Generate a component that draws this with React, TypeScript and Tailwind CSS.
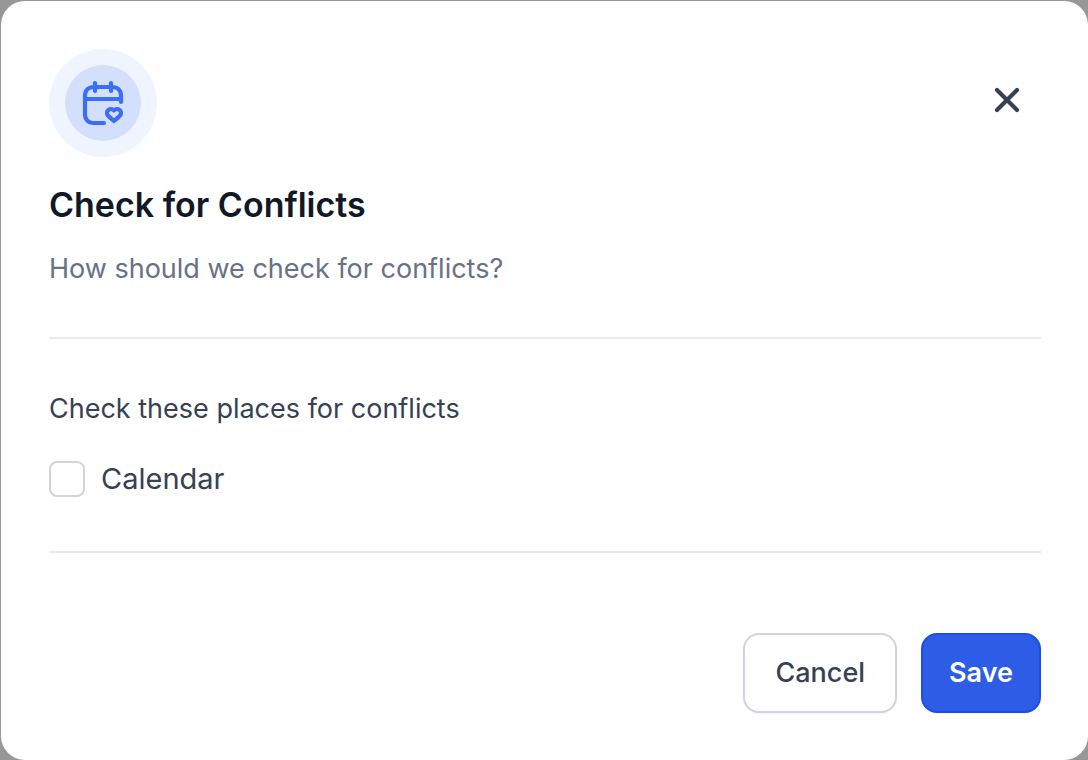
import { X } from "lucide-react";

export default function App() {
  return (
    <div className="flex min-h-screen flex-col bg-[#979797] pt-px pl-px font-['Inter',sans-serif]">
      <div
        role="dialog"
        aria-labelledby="conflicts-title"
        className="grow rounded-3xl bg-white pt-12 pr-[47px] pb-[47px] pl-12"
      >
        {/* header */}
        <div className="flex items-center justify-between">
          <div className="flex size-27 items-center justify-center rounded-full bg-[#eff4ff]">
            <div className="flex size-19 items-center justify-center rounded-full bg-[#d3dffb]">
              <svg
                viewBox="0 0 24 24"
                className="size-12 text-[#3b6ef6]"
                fill="none"
                stroke="currentColor"
                strokeWidth="2.1"
                strokeLinecap="round"
                strokeLinejoin="round"
              >
                <path d="M21 11.5V8A4 4 0 0 0 17 4H7A4 4 0 0 0 3 8V18A4 4 0 0 0 7 22H12.500M21 10H3M16 2V6M8 2V6" />
                <path d="M17.498 15.712C16.798 14.933 15.631 14.723 14.754 15.437C13.877 16.15 13.754 17.343 14.443 18.187C15.131 19.031 17.498 21 17.498 21C17.498 21 19.864 19.031 20.553 18.187C21.241 17.343 21.133 16.143 20.241 15.437C19.349 14.731 18.197 14.933 17.498 15.712Z" />
              </svg>
            </div>
          </div>
          <button type="button" aria-label="Close" className="mb-1.5 p-3.5 text-[#364153]">
            <X className="size-10" strokeWidth={2.5} />
          </button>
        </div>

        <h1 id="conflicts-title" className="mt-7 text-[34px] leading-10 font-semibold text-[#111827]">
          Check for Conflicts
        </h1>
        <p className="mt-6 text-[27px] leading-10 text-[#687186]">How should we check for conflicts?</p>

        <hr className="my-12 border-t-2 border-[#e9eaec]" />

        {/* places */}
        <fieldset className="text-[#364153]">
          <legend className="text-[27px] leading-11">Check these places for conflicts</legend>
          <label className="mt-6 flex items-center gap-4 text-[29px] leading-12">
            <input
              type="checkbox"
              className="size-9 appearance-none rounded-lg border-2 border-[#d1d5db] bg-white checked:bg-[#2b5ce6]"
            />
            Calendar
          </label>
        </fieldset>

        <hr className="mt-12 border-t-2 border-[#e9eaec]" />

        {/* actions */}
        <div className="mt-20 flex justify-end gap-6 text-[27px]">
          <button
            type="button"
            className="h-20 rounded-2xl border-2 border-[#d1d5db] bg-white px-7.5 font-medium text-[#364153] shadow-xs"
          >
            Cancel
          </button>
          <button
            type="button"
            className="h-20 rounded-2xl border-2 border-[#1d4ee0] bg-[#2d5de6] px-6.5 font-semibold text-white shadow-xs"
          >
            Save
          </button>
        </div>
      </div>
    </div>
  );
}
